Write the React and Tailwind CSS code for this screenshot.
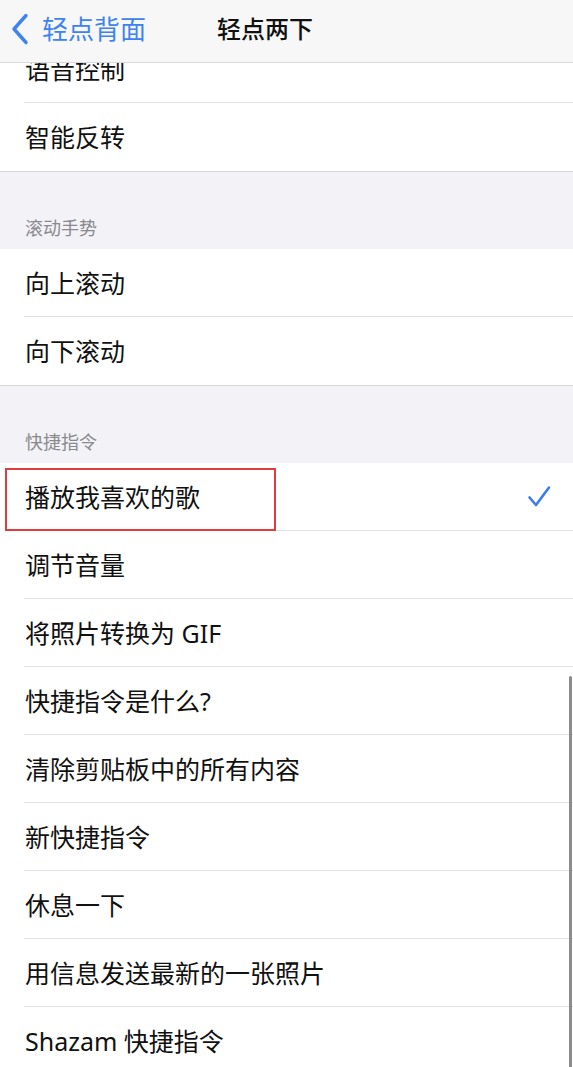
import React from 'react';

const FONT = { fontFamily: '"Noto Sans", "Noto Sans CJK SC", sans-serif' };

const groups = [
  { title: null, items: ['语音控制', '智能反转'] },
  { title: '滚动手势', items: ['向上滚动', '向下滚动'] },
  {
    title: '快捷指令',
    items: [
      '播放我喜欢的歌',
      '调节音量',
      '将照片转换为 GIF',
      '快捷指令是什么?',
      '清除剪贴板中的所有内容',
      '新快捷指令',
      '休息一下',
      '用信息发送最新的一张照片',
      'Shazam 快捷指令',
    ],
  },
];

const SELECTED = '播放我喜欢的歌';

function Check() {
  return (
    <svg width="24" height="24" viewBox="0 0 24 24" fill="none">
      <path d="M2.5 12.5 L9 20 L22 2.5" stroke="#3a7cf0" strokeWidth="2.6" strokeLinecap="round" strokeLinejoin="round" />
    </svg>
  );
}

function Row({ label, last }) {
  const selected = label === SELECTED;
  return (
    <div className="relative h-[68px] flex items-center pl-[25px] pr-[22px]">
      <span className="text-[25px] text-[#111] leading-none flex-1">{label}</span>
      {selected && <Check />}
      {!last && <div className="absolute left-[24px] right-0 bottom-0 h-px bg-[#e2e2e4]" />}
      {/* highlight frame around the chosen shortcut */}
      {selected && (
        <div className="absolute left-[5px] top-[5px] w-[271px] h-[63px] border-2 border-[#e03b3f]" />
      )}
    </div>
  );
}

function Group({ title, items }) {
  return (
    <div>
      {title && (
        <div className="h-[77px] flex items-end pl-[25px] pb-[12px]">
          <span className="text-[18px] text-[#8a8a8e] leading-none">{title}</span>
        </div>
      )}
      <div className="bg-white border-b border-[#d6d6d8]">
        {items.map((t, i) => (
          <Row key={t} label={t} last={i === items.length - 1} />
        ))}
      </div>
    </div>
  );
}

export default function App() {
  return (
    <div className="relative w-[573px] h-[1067px] overflow-hidden bg-[#f2f2f7]" style={FONT}>
      <div className="pt-[35px]">
        {groups.map((g, i) => (
          <Group key={i} title={g.title} items={g.items} />
        ))}
      </div>

      {/* translucent navigation bar sitting over the list */}
      <div className="absolute top-0 left-0 right-0 h-[63px] pb-[5px] bg-[#f7f7f8] border-b border-[#d9d9db] flex items-center">
        <div className="flex items-center pl-[11px]">
          <svg width="18" height="32" viewBox="0 0 18 32" fill="none">
            <path d="M15 2.5 L3 16 L15 29.5" stroke="#3d84f0" strokeWidth="3.4" strokeLinecap="round" strokeLinejoin="round" />
          </svg>
          <span className="ml-[13px] text-[26px] text-[#3d84f0] leading-none">轻点背面</span>
        </div>
        <span className="absolute left-[217px] text-[24px] font-medium text-[#111] leading-none">轻点两下</span>
      </div>

      {/* scroll indicator */}
      <div className="absolute right-[1px] top-[676px] w-[3px] h-[400px] rounded-full bg-[#8c8c8c]" />
    </div>
  );
}
